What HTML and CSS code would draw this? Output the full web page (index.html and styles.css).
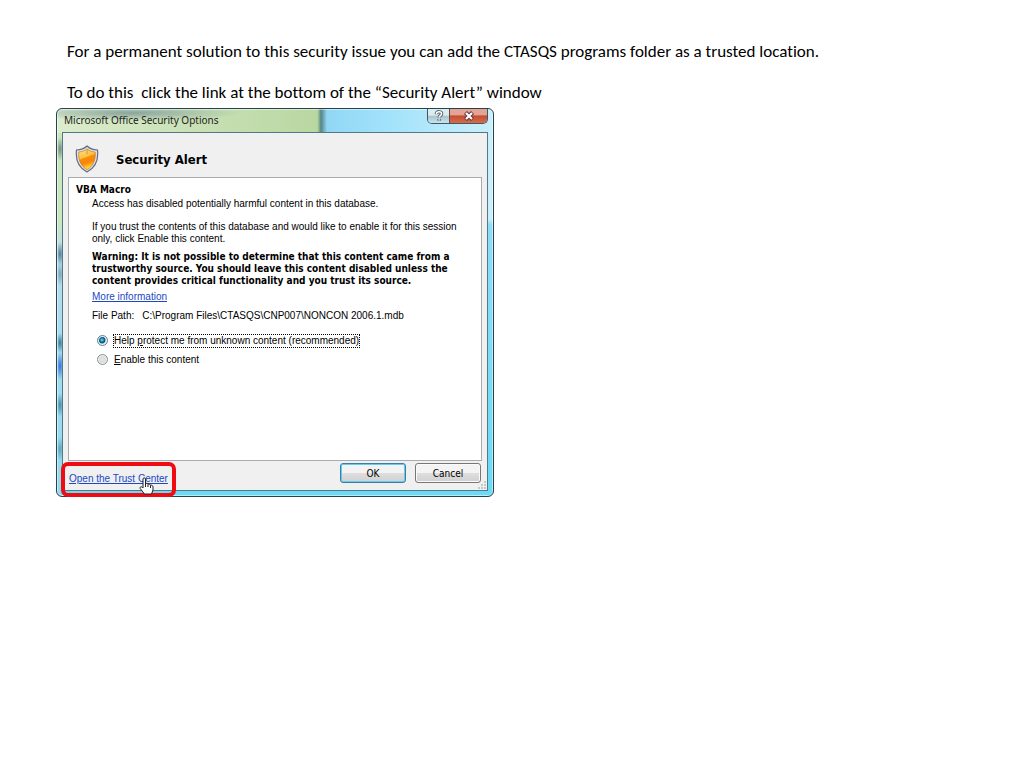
FILE: index.html
```html
<!DOCTYPE html>
<html lang="en">
<head>
    <meta charset="UTF-8">
    <meta name="viewport" content="width=device-width, initial-scale=1.0">
    <title>Trusted location</title>
    <link rel="stylesheet" href="styles.css">
</head>
<body>
    <div class="intro">
        <p>For a permanent solution to this security issue you can add the CTASQS programs folder as a trusted location.</p>
        <p>To do this&nbsp; click the link at the bottom of the “Security Alert” window</p>
    </div>

    <form class="window">
        <div class="titlebar">
            <span class="title">Microsoft Office Security Options</span>
            <div class="controls">
                <button type="button" class="help" aria-label="Help">
                    <svg width="10" height="12" viewBox="0 0 10 12"><path d="M2.5 4.2V3.6C2.5 1.2 7.6 1.2 7.6 3.8C7.6 5.6 5.1 5.5 5.1 7.6M5.1 9V10.8" fill="none" stroke="#4b5d6b" stroke-width="3.4"/><path d="M2.5 4.2V3.6C2.5 1.2 7.6 1.2 7.6 3.8C7.6 5.6 5.1 5.5 5.1 7.6M5.1 9.2V10.6" fill="none" stroke="#fff" stroke-width="1.6"/></svg>
                </button>
                <button type="button" class="close" aria-label="Close">
                    <svg width="12" height="10" viewBox="0 0 12 10"><path d="M2.5 1.5L9.5 8.5M9.5 1.5L2.5 8.5" stroke="#65343a" stroke-width="4.2"/><path d="M3 2L9 8M9 2L3 8" stroke="#fff" stroke-width="2.2"/></svg>
                </button>
            </div>
        </div>

        <div class="client">
            <div class="heading">
                <svg class="shield" width="24" height="28" viewBox="0 0 24 28">
                    <defs>
                        <linearGradient id="gold" x1="0" y1="0" x2="0.3" y2="1">
                            <stop offset="0" stop-color="#ffe391"/>
                            <stop offset="0.45" stop-color="#ffc13c"/>
                            <stop offset="0.52" stop-color="#f78b0c"/>
                            <stop offset="0.75" stop-color="#fa8609"/>
                            <stop offset="1" stop-color="#ffdc3c"/>
                        </linearGradient>
                    </defs>
                    <path d="M12 1C9.500 3.500 5.500 4.800 1.500 5C0.500 14 3 22.500 12 27C21 22.500 23.500 14 22.500 5C18.500 4.800 14.500 3.500 12 1Z" fill="#dfe3ed" stroke="#66697e" stroke-width="1.200"/>
                    <path d="M12 4C9.500 5.800 6.800 6.800 3.800 7C3.200 14 5 20.500 12 24.700C19 20.500 20.800 14 20.200 7C17.200 6.800 14.500 5.800 12 4Z" fill="url(#gold)" stroke="#bd7b29" stroke-width="0.700"/>
                    <path d="M12 4V9" stroke="#c49a35" stroke-width="1"/>
                </svg>
                <h1>Security Alert</h1>
            </div>

            <div class="panel">
                <h2>VBA Macro</h2>
                <div class="details">
                    <p>Access has disabled potentially harmful content in this database.</p>
                    <p class="trust">If you trust the contents of this database and would like to enable it for this session<br>only, click Enable this content.</p>
                    <p class="warning">Warning: It is not possible to determine that this content came from a<br>trustworthy source. You should leave this content disabled unless the<br>content provides critical functionality and you trust its source.</p>
                    <a href="#info">More information</a>
                    <p class="path"><span>File Path:</span><span>C:\Program Files\CTASQS\CNP007\NONCON 2006.1.mdb</span></p>
                    <div class="option">
                        <input type="radio" id="protect" name="content" checked>
                        <label for="protect" class="focused">Help <u>p</u>rotect me from unknown content (recommended)</label>
                    </div>
                    <div class="option">
                        <input type="radio" id="enable" name="content">
                        <label for="enable"><u>E</u>nable this content</label>
                    </div>
                </div>
            </div>

            <div class="footer">
                <div class="trust-link">
                    <a href="#trust">Open the Trust Center</a>
                    <svg class="cursor" width="16" height="18" viewBox="0 0 16 18"><path d="M4 10V2C4 0.500 6.500 0.500 6.500 2V7C7 6 9 6 9 7.500C9.500 6.500 11.500 7 11.500 8.500C12.500 7.700 14 8.500 14 10V13L12.500 17H5.500L1.200 11.500C0.500 9.800 2.500 9 4 11Z" fill="#fff" stroke="#222" stroke-width="1"/><path d="M6.500 7V10M9 7.500V10M11.500 8.500V11" stroke="#222" stroke-width="1"/></svg>
                </div>
                <button type="button" class="btn default">OK</button>
                <button type="button" class="btn">Cancel</button>
            </div>
            <svg class="grip" width="9" height="9" viewBox="0 0 9 9"><path d="M6 0h2v2h-2zM3 3h2v2h-2zM6 3h2v2h-2zM0 6h2v2h-2zM3 6h2v2h-2zM6 6h2v2h-2z" fill="#c5cac8"/></svg>
        </div>
    </form>
</body>
</html>
```
FILE: styles.css
```css
* {
    box-sizing: border-box;
}
body {
    margin: 0;
    padding: 42px 56px;
    background: #fff;
    color: #000;
    font-family: "Liberation Sans", Arial, sans-serif;
    font-size: 10px;
    line-height: 12px;
}
h1, h2, p {
    margin: 0;
}
a {
    color: #1b48c4;
}
.intro {
    display: flex;
    flex-direction: column;
    gap: 21px;
    padding: 0 11px;
    margin-bottom: 5px;
    font-family: Carlito, Lato, sans-serif;
    font-size: 17px;
    font-variant-ligatures: none;
    line-height: 20px;
}
.window {
    max-width: 438px;
    padding: 0 5px 5px;
    border: 1px solid #23434d;
    border-radius: 6px;
    background:
        radial-gradient(ellipse 4px 12px at 3px 40px, #718e82, transparent),
        radial-gradient(ellipse 4px 12px at 3px 145px, #537c98, transparent),
        radial-gradient(ellipse 4px 12px at 3px 165px, #7ba3b9, transparent),
        radial-gradient(ellipse 4px 10px at 3px 234px, #347c91, transparent),
        radial-gradient(ellipse 4px 14px at 3px 257px, #3472d8, transparent),
        radial-gradient(ellipse 4px 12px at 3px 296px, #428ea8, transparent),
        radial-gradient(ellipse 4px 12px at 3px 340px, #5aa3b8, transparent),
        radial-gradient(ellipse 110px 8px at 75px 4px, #8aa49b, transparent),
        linear-gradient(to right, #dceccd, #b9d7a1 260px, #a9cc94 261px, #55838a 264px, #91d7f4 270px, #a2e2fb 330px, #c9effb) top / 100% 24px no-repeat,
        linear-gradient(to bottom, #cce6bc 110px, #b9dded 146px, #a5dcef 240px, #8edbed) left / 6px 100% no-repeat,
        linear-gradient(to bottom, #caeffa 110px, #8edcf8 116px, #6bdaf4);
    box-shadow: inset 0 0 0 1px rgba(255, 255, 255, 0.5);
}
.titlebar {
    display: flex;
    justify-content: space-between;
    height: 23px;
    padding-left: 2px;
}
.title {
    font-family: "Noto Sans", "Open Sans", sans-serif;
    line-height: 22px;
    color: #1c2422;
}
.controls {
    display: flex;
    height: 15px;
    border: 1px solid #3e5965;
    border-top: none;
    border-radius: 0 0 5px 5px;
    overflow: hidden;
}
.controls button {
    display: flex;
    align-items: center;
    justify-content: center;
    padding: 0;
    border: none;
}
.controls .help {
    width: 21px;
    background: linear-gradient(#dcebf0 45%, #a9c3cd 50%, #c9e4ec);
}
.controls .close {
    width: 38px;
    border-left: 1px solid #704347;
    background: linear-gradient(#e3a495 40%, #c64d35 50%, #d46c4b);
}
.client {
    position: relative;
    padding: 0 5px;
    border: 1px solid #527986;
    background: #f0f0f0;
}
.heading {
    display: flex;
    align-items: center;
    gap: 17px;
    height: 44px;
    padding: 8px 0 0 7px;
}
.heading h1, .panel h2, .warning {
    font-family: "DejaVu Sans Condensed", "Noto Sans", sans-serif;
    font-size: 10px;
    font-weight: bold;
}
.heading h1 {
    padding-top: 2px;
    font-size: 13px;
    line-height: 16px;
}
.panel {
    min-height: 284px;
    padding: 6px 7px;
    border: 1px solid #a9abb0;
    background: #fff;
}
.details {
    padding: 2px 0 0 16px;
}
.trust {
    margin-top: 11px;
}
.panel .warning {
    margin: 6px 0 4px;
}
.path {
    display: flex;
    gap: 8px;
    margin: 7px 0 11px;
}
.option {
    display: flex;
    align-items: center;
    gap: 5px;
    height: 15px;
    margin-bottom: 4px;
    padding-left: 5px;
}
.option input {
    appearance: none;
    width: 11px;
    height: 11px;
    margin: 0;
    border: 1px solid #8b8f91;
    border-radius: 50%;
    background: radial-gradient(#e5e5e5, #cfd1d2);
    box-shadow: inset 0 0 0 1px #f4f4f4;
}
.option input:checked {
    border-color: #52839a;
    background: radial-gradient(circle at 4px 4px, #8ee0f5, #12769e 2px, #0b4d72 3px, #d5eef6 4px);
}
.option label {
    border: 1px solid transparent;
}
.option .focused {
    border: 1px dotted #000;
}
.footer {
    display: flex;
    align-items: flex-start;
    gap: 9px;
    height: 29px;
    padding: 2px 1px 0 0;
}
/* red marker drawn round the link */
.trust-link {
    position: relative;
    height: 35px;
    margin: -1px auto 0 -7px;
    padding: 7px 4px 0;
    border: 4px solid #ee0c12;
    border-radius: 7px;
}
.cursor {
    position: absolute;
    left: 74px;
    top: 11px;
}
.btn {
    width: 66px;
    height: 20px;
    padding: 0;
    border: 1px solid #777;
    border-radius: 3px;
    background: linear-gradient(#f3f3f3 48%, #dedede 52%, #d0d0d0);
    box-shadow: inset 0 0 0 1px #fafafa;
    color: #000;
    font-family: "DejaVu Sans Condensed", "Noto Sans", sans-serif;
    font-size: 10px;
}
.btn.default {
    border-color: #397fa5;
    box-shadow: inset 0 0 0 1px #65cbf0;
}
.grip {
    position: absolute;
    right: 0;
    bottom: 0;
}
```
